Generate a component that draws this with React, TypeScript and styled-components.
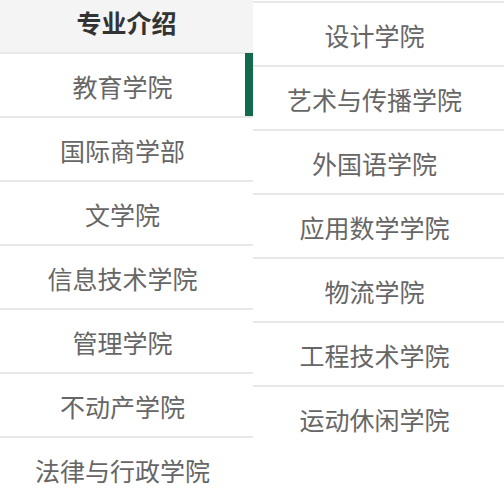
import styled, {createGlobalStyle} from "styled-components";

const GlobalStyle = createGlobalStyle`
    body {
        margin: 0;
        background: #fff;
        font-family: "Noto Sans CJK SC", "Noto Sans", sans-serif;
    }
`

const leftItems = ["教育学院", "国际商学部", "文学院", "信息技术学院", "管理学院", "不动产学院", "法律与行政学院"];
const rightItems = ["设计学院", "艺术与传播学院", "外国语学院", "应用数学学院", "物流学院", "工程技术学院", "运动休闲学院"];

export default function App() {
    const active = 0;

    return <>
        <GlobalStyle/>
        <Page>
            <LeftCol>
                <Header>专业介绍</Header>
                {leftItems.map((name, i) => <Item key={name} $active={i === active}>{name}</Item>)}
            </LeftCol>
            <RightCol>
                {rightItems.map(name => <Item key={name}>{name}</Item>)}
            </RightCol>
        </Page>
    </>
}

const Page = styled.div`
    display: flex;
    width: 504px;
    height: 500px;
    overflow: hidden;
`

const LeftCol = styled.div`
    flex: 0 0 253px;
    display: flex;
    flex-direction: column;
`

const RightCol = styled.div`
    flex: 1;
    display: flex;
    flex-direction: column;
    margin-top: 1px;
`

const Header = styled.div`
    flex: 0 0 52px;
    display: flex;
    align-items: center;
    justify-content: center;
    padding-bottom: 9px;
    box-sizing: border-box;
    background: #f4f4f4;
    color: #333;
    font-size: 25px;
    font-weight: bold;
`

const Item = styled.div<{ $active?: boolean }>`
    position: relative;
    flex: 0 0 64px;
    box-sizing: border-box;
    display: flex;
    align-items: center;
    justify-content: center;
    padding: 2px 8px 0 0;
    border-top: 2px solid #e8e8e8;
    color: #666;
    font-size: 25px;

    &::after {
        content: "";
        display: ${p => p.$active ? "block" : "none"};
        position: absolute;
        top: -1px;
        right: 0;
        bottom: 0;
        width: 8px;
        background: #106a4b;
    }
`
